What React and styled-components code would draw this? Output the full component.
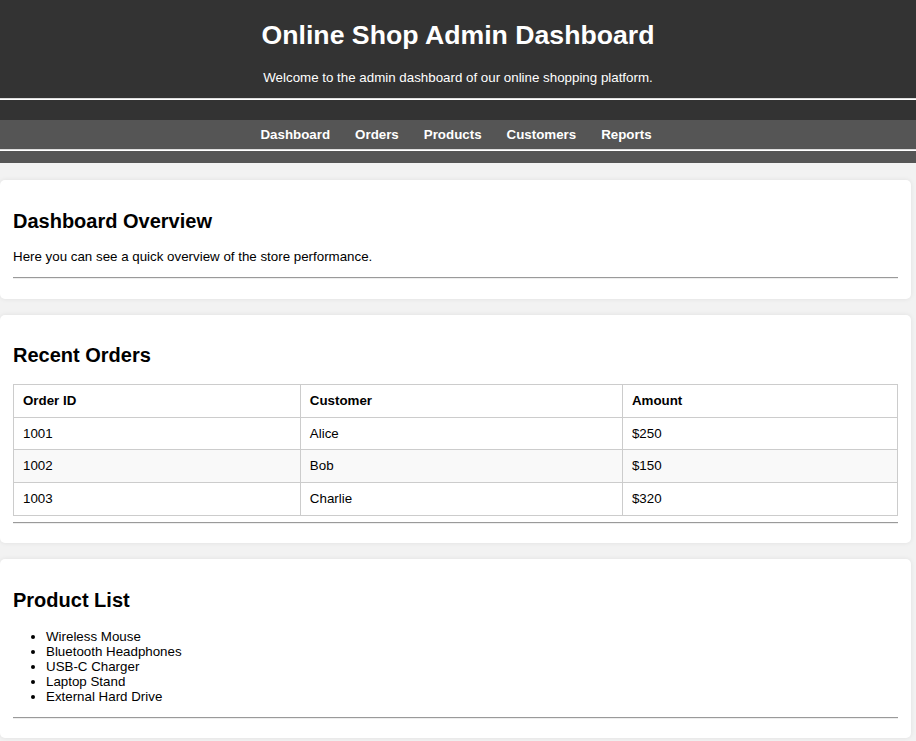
import React from 'react';
import styled, { createGlobalStyle } from 'styled-components';

const GlobalStyle = createGlobalStyle`
  body {
    margin: 0;
    background: #f2f2f2;
    font-family: "Liberation Sans", Arial, sans-serif;
    font-size: 13.33px;
    color: #000;
  }
`;

const Header = styled.header`
  background: #333;
  color: #fff;
  text-align: center;
  padding: 0 0 20px;
  overflow: hidden;

  h1 {
    font-size: 26.67px;
    line-height: 31px;
    margin: 20px 0 19px;
  }

  p {
    line-height: 15px;
    margin: 0 0 13px;
  }
`;

const Rule = styled.hr`
  margin: 6px 0 6.5px;
  border: 0;
  border-top: 1px solid #9a9a9a;
  border-bottom: 1px solid #eee;
`;

const HeaderRule = styled(Rule)`
  margin: 0;
  border-top-color: #ddd;
  border-bottom-color: #fff;
`;

const Nav = styled.nav`
  background: #555;
  padding: 7px 0 12px;
  text-align: center;
`;

const NavLinks = styled.div`
  display: flex;
  justify-content: center;
  gap: 25px;
  margin: 0 4px 7px 0;
`;

const NavLink = styled.a`
  color: #fff;
  font-weight: bold;
  text-decoration: none;
  line-height: 15px;
`;

const Main = styled.main`
  padding: 1px 5px 1px 0;
`;

const Card = styled.section`
  background: #fff;
  margin: 16px 0;
  padding: 13px;
  border-radius: 5px;
  box-shadow: 0 0 5px rgba(0, 0, 0, 0.08);

  h2 {
    font-size: 20px;
    line-height: 23px;
    margin: 16.6px 0;
  }

  p {
    line-height: 15px;
    margin: 13px 0;
  }
`;

const Table = styled.table`
  width: 100%;
  border-collapse: collapse;

  th,
  td {
    border: 1px solid #ccc;
    padding: 8px 9px;
    text-align: left;
    line-height: 15.75px;
  }

  tbody tr:nth-child(even) {
    background: #f9f9f9;
  }
`;

const List = styled.ul`
  margin: 13px 0;
  padding-left: 33px;

  li {
    line-height: 15px;
  }
`;

const orders = [
  { id: 1001, customer: 'Alice', amount: '$250' },
  { id: 1002, customer: 'Bob', amount: '$150' },
  { id: 1003, customer: 'Charlie', amount: '$320' },
];

const products = [
  'Wireless Mouse',
  'Bluetooth Headphones',
  'USB-C Charger',
  'Laptop Stand',
  'External Hard Drive',
];

const App = () => (
  <>
    <GlobalStyle />
    <Header>
      <h1>Online Shop Admin Dashboard</h1>
      <p>Welcome to the admin dashboard of our online shopping platform.</p>
      <HeaderRule />
    </Header>
    <Nav>
      <NavLinks>
        {['Dashboard', 'Orders', 'Products', 'Customers', 'Reports'].map(l => (
          <NavLink key={l} href="#">
            {l}
          </NavLink>
        ))}
      </NavLinks>
      <HeaderRule />
    </Nav>
    <Main>
      <Card>
        <h2>Dashboard Overview</h2>
        <p>Here you can see a quick overview of the store performance.</p>
        <Rule />
      </Card>
      <Card>
        <h2>Recent Orders</h2>
        <Table>
          <thead>
            <tr>
              <th>Order ID</th>
              <th>Customer</th>
              <th>Amount</th>
            </tr>
          </thead>
          <tbody>
            {orders.map(o => (
              <tr key={o.id}>
                <td>{o.id}</td>
                <td>{o.customer}</td>
                <td>{o.amount}</td>
              </tr>
            ))}
          </tbody>
        </Table>
        <Rule />
      </Card>
      <Card>
        <h2>Product List</h2>
        <List>
          {products.map(p => (
            <li key={p}>{p}</li>
          ))}
        </List>
        <Rule />
      </Card>
    </Main>
  </>
);

export default App;
